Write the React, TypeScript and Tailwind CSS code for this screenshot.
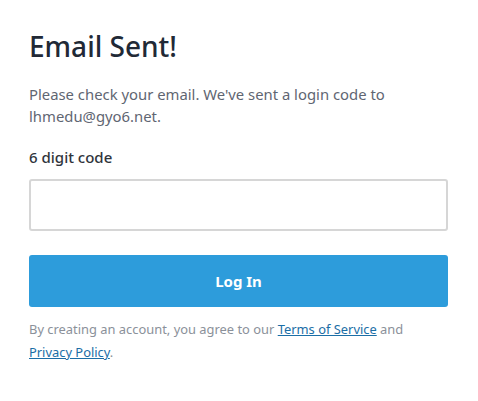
import React from "react";

export default function App() {
  return (
    <div className="w-[478px] h-[401px] bg-white" style={{ fontFamily: '"Noto Sans", sans-serif' }}>
      <div className="pl-[29px] pr-[30px] pt-[27px] flex flex-col">
        <h1 className="text-[28px] leading-[38px] font-medium text-[#212936]">Email Sent!</h1>
        <p className="mt-[18px] text-[14.85px] leading-[22px] text-[#5f6672]">
          Please check your email. We've sent a login code to lhmedu@gyo6.net.
        </p>
        <label className="mt-[19px] text-[15px] leading-[22px] font-medium text-[#2f343b]">6 digit code</label>
        <input
          className="mt-[11px] h-[52px] w-full border-2 border-[#d6d6d6] rounded-[3px] px-3 outline-none"
          type="text"
        />
        <button className="mt-[24px] h-[52px] w-full bg-[#2d9cdb] rounded-[3px] text-white text-[15px] font-bold">
          Log In
        </button>
        <p className="mt-[11px] text-[12.9px] leading-[23px] text-[#8b919a]">
          By creating an account, you agree to our{" "}
          <a href="#" className="underline text-[#1b6ea6]">Terms of Service</a> and{" "}
          <a href="#" className="underline text-[#1b6ea6]">Privacy Policy</a>.
        </p>
      </div>
    </div>
  );
}
